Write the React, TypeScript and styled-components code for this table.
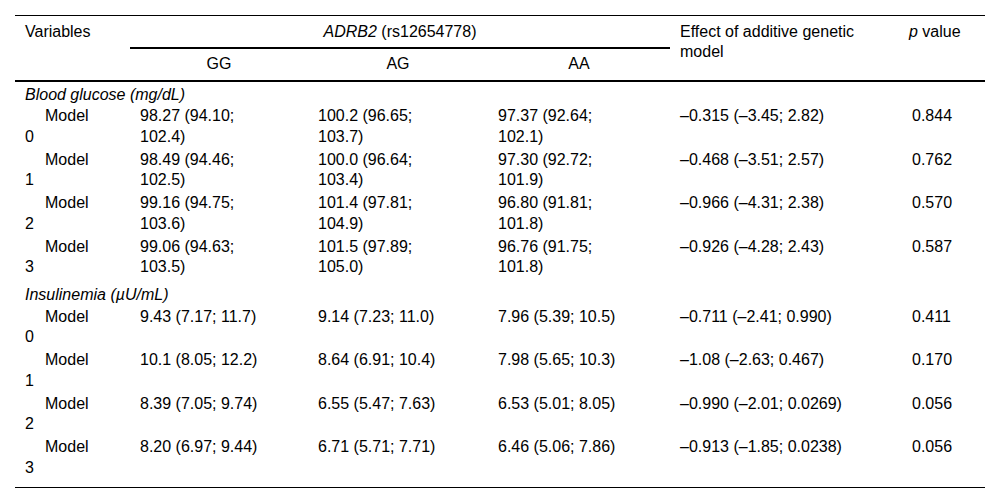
import React from "react";
import styled, { createGlobalStyle } from "styled-components";

const Global = createGlobalStyle`
  html, body { margin: 0; padding: 0; background: #ffffff; }
  body {
    font-family: "Liberation Sans", Arial, Helvetica, sans-serif;
    color: #000000;
  }
`;

const Page = styled.div`
  padding: 15px 15px 0 15px;
`;

const Table = styled.table`
  width: 970px;
  border-collapse: collapse;
  table-layout: fixed;
  font-size: 16px;
  line-height: 20.5px;
  border-top: 1px solid #000;
  border-bottom: 1px solid #000;
`;

const HeadCell = styled.th<{ $center?: boolean; $rule?: boolean }>`
  font-weight: normal;
  text-align: ${(p) => (p.$center ? "center" : "left")};
  vertical-align: top;
  padding: 5.5px 10px 4.5px 10px;
  border-bottom: ${(p) => (p.$rule ? "2px solid #000" : "none")};
`;

const SubHeadCell = styled.th`
  font-weight: normal;
  text-align: center;
  vertical-align: top;
  padding: 5.5px 10px 5px 10px;
  border-bottom: 2px solid #000;
`;

const Em = styled.i`
  font-style: italic;
`;

const SectionCell = styled.td<{ $top?: number }>`
  font-style: italic;
  padding: ${(p) => p.$top ?? 3}px 10px 0 10px;
  vertical-align: top;
`;

const Row = styled.tr<{ $last?: boolean }>`
  & > td {
    padding-bottom: ${(p) => (p.$last ? "8.5px" : "1.25px")};
  }
`;

const LabelCell = styled.td`
  padding: 1.25px 10px;
  vertical-align: top;
  text-indent: 20px;
`;

const ValueCell = styled.td<{ $shift?: number }>`
  padding: 1.25px 10px 1.25px ${(p) => 10 + (p.$shift ?? 0)}px;
  vertical-align: top;
  white-space: nowrap;
`;

type Model = {
  label: string;
  gg: string[];
  ag: string[];
  aa: string[];
  effect: string;
  p: string;
};

const glucose: Model[] = [
  { label: "0", gg: ["98.27 (94.10;", "102.4)"], ag: ["100.2 (96.65;", "103.7)"], aa: ["97.37 (92.64;", "102.1)"], effect: "–0.315 (–3.45; 2.82)", p: "0.844" },
  { label: "1", gg: ["98.49 (94.46;", "102.5)"], ag: ["100.0 (96.64;", "103.4)"], aa: ["97.30 (92.72;", "101.9)"], effect: "–0.468 (–3.51; 2.57)", p: "0.762" },
  { label: "2", gg: ["99.16 (94.75;", "103.6)"], ag: ["101.4 (97.81;", "104.9)"], aa: ["96.80 (91.81;", "101.8)"], effect: "–0.966 (–4.31; 2.38)", p: "0.570" },
  { label: "3", gg: ["99.06 (94.63;", "103.5)"], ag: ["101.5 (97.89;", "105.0)"], aa: ["96.76 (91.75;", "101.8)"], effect: "–0.926 (–4.28; 2.43)", p: "0.587" },
];

const insulin: Model[] = [
  { label: "0", gg: ["9.43 (7.17; 11.7)"], ag: ["9.14 (7.23; 11.0)"], aa: ["7.96 (5.39; 10.5)"], effect: "–0.711 (–2.41; 0.990)", p: "0.411" },
  { label: "1", gg: ["10.1 (8.05; 12.2)"], ag: ["8.64 (6.91; 10.4)"], aa: ["7.98 (5.65; 10.3)"], effect: "–1.08 (–2.63; 0.467)", p: "0.170" },
  { label: "2", gg: ["8.39 (7.05; 9.74)"], ag: ["6.55 (5.47; 7.63)"], aa: ["6.53 (5.01; 8.05)"], effect: "–0.990 (–2.01; 0.0269)", p: "0.056" },
  { label: "3", gg: ["8.20 (6.97; 9.44)"], ag: ["6.71 (5.71; 7.71)"], aa: ["6.46 (5.06; 7.86)"], effect: "–0.913 (–1.85; 0.0238)", p: "0.056" },
];

const Lines: React.FC<{ lines: string[] }> = ({ lines }) => (
  <>
    {lines.map((l, i) => (
      <React.Fragment key={i}>
        {i > 0 && <br />}
        {l}
      </React.Fragment>
    ))}
  </>
);

const ModelRow: React.FC<{ m: Model; last?: boolean }> = ({ m, last }) => (
  <Row $last={last}>
    <LabelCell>
      Model
      <br />
      {m.label}
    </LabelCell>
    <ValueCell>
      <Lines lines={m.gg} />
    </ValueCell>
    <ValueCell>
      <Lines lines={m.ag} />
    </ValueCell>
    <ValueCell>
      <Lines lines={m.aa} />
    </ValueCell>
    <ValueCell>{m.effect}</ValueCell>
    <ValueCell $shift={3}>{m.p}</ValueCell>
  </Row>
);

export default function App() {
  return (
    <>
      <Global />
      <Page>
        <Table>
          <colgroup>
            <col style={{ width: 115 }} />
            <col style={{ width: 178 }} />
            <col style={{ width: 180 }} />
            <col style={{ width: 182 }} />
            <col style={{ width: 229 }} />
            <col style={{ width: 86 }} />
          </colgroup>
          <thead>
            <tr>
              <HeadCell rowSpan={2} $rule>
                Variables
              </HeadCell>
              <HeadCell colSpan={3} $center $rule>
                <Em>ADRB2</Em> (rs12654778)
              </HeadCell>
              <HeadCell rowSpan={2} $rule>
                Effect of additive genetic
                <br />
                model
              </HeadCell>
              <HeadCell rowSpan={2} $rule>
                <Em>p</Em> value
              </HeadCell>
            </tr>
            <tr>
              <SubHeadCell>GG</SubHeadCell>
              <SubHeadCell>AG</SubHeadCell>
              <SubHeadCell>AA</SubHeadCell>
            </tr>
          </thead>
          <tbody>
            <tr>
              <SectionCell colSpan={6}>Blood glucose (mg/dL)</SectionCell>
            </tr>
            {glucose.map((m) => (
              <ModelRow key={"g" + m.label} m={m} />
            ))}
            <tr>
              <SectionCell colSpan={6} $top={6}>
                Insulinemia (µU/mL)
              </SectionCell>
            </tr>
            {insulin.map((m, i) => (
              <ModelRow key={"i" + m.label} m={m} last={i === insulin.length - 1} />
            ))}
          </tbody>
        </Table>
      </Page>
    </>
  );
}
